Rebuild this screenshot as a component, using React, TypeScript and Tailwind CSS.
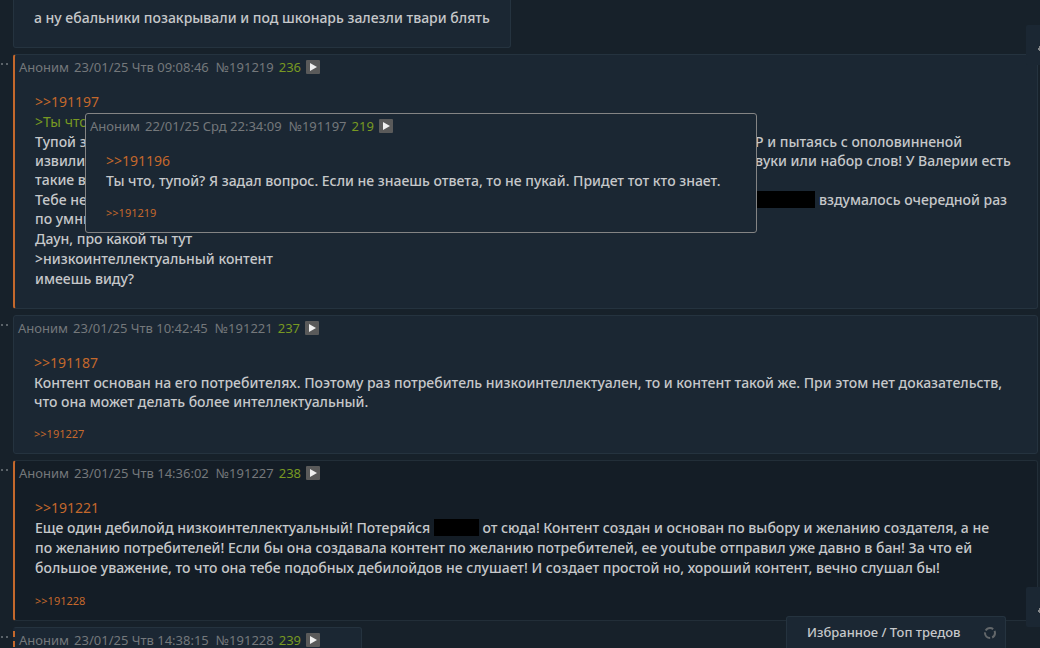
import React from 'react';
import clsx from 'clsx';

interface PostData {
  name: string;
  date: string;
  id: string;
  index: number;
}

interface PostProps {
  post: PostData;
  variant?: 'plain' | 'reply' | 'dark' | 'dashed' | 'preview';
  className?: string;
  replies?: string[];
  children?: React.ReactNode;
}

const posts: Record<string, PostData> = {
  p219: { name: 'Аноним', date: '22/01/25 Срд 22:34:09', id: '191197', index: 219 },
  p236: { name: 'Аноним', date: '23/01/25 Чтв 09:08:46', id: '191219', index: 236 },
  p237: { name: 'Аноним', date: '23/01/25 Чтв 10:42:45', id: '191221', index: 237 },
  p238: { name: 'Аноним', date: '23/01/25 Чтв 14:36:02', id: '191227', index: 238 },
  p239: { name: 'Аноним', date: '23/01/25 Чтв 14:38:15', id: '191228', index: 239 },
};

const variants = {
  plain: 'border border-[#25333f] bg-[#1b2733]',
  reply: 'border border-l-2 border-[#25333f] border-l-[#c4682c] bg-[#1b2733]',
  dark: 'border border-l-2 border-[#222e38] border-l-[#c4682c] bg-[#141d26]',
  dashed: 'border border-l-2 border-[#25333f] border-l-[#c4682c] [border-left-style:dashed] bg-[#1b2733]',
  preview: 'border border-[#848484] bg-[#1b2733]',
};

const PostLink = ({ id }: { id: string }) => (
  <a href={`#${id}`} className="font-normal text-[#c4682c]">&gt;&gt;{id}</a>
);

const Redacted = ({ className }: { className: string }) => (
  <span className={clsx('mt-px inline-block h-[17px] bg-black align-top', className)} />
);

// A line whose middle part stays under the preview
const SplitLine = ({ left, children }: { left: string; children: React.ReactNode }) => (
  <span className="flex">
    <span className="w-[720px] shrink-0">{left}</span>
    <span className="flex gap-1">{children}</span>
  </span>
);

const PostHeader = ({ post }: { post: PostData }) => (
  <header className="flex h-5 items-center gap-[5px] text-[13px] leading-5 text-[#74787b]">
    <span>{post.name}</span>
    <time className="pr-[2px]">{post.date}</time>
    <a href={`#${post.id}`}>№{post.id}</a>
    <span className="text-[#789922]">{post.index}</span>
    <button type="button" aria-label="Меню поста" className="flex h-[14px] w-[14px] items-center justify-center rounded-[1px] bg-[#5a5a5a]">
      <svg width="14" height="14" viewBox="0 0 14 14" fill="#f0f0f0"><path d="M4 3l7 4-7 4z" /></svg>
    </button>
  </header>
);

const Post = ({ post, variant = 'plain', className, replies, children }: PostProps) => (
  <article className={clsx('rounded-[3px] pt-[2px] pl-1', variants[variant], className)}>
    <PostHeader post={post} />
    <div className="mt-[15px] flex flex-col gap-px pr-5 pl-4 text-[14px] leading-[19px] font-medium">{children}</div>
    {replies ? (
      <div className="mt-[13px] pb-[9px] pl-4 text-[11px] leading-5">
        {replies.map((id) => <PostLink key={id} id={id} />)}
      </div>
    ) : (
      <div className="h-5" />
    )}
  </article>
);

// Gutter with the clipped dots + the post itself
const Row = ({ children }: { children: React.ReactNode }) => (
  <div className="flex">
    <div className="w-[13px] shrink-0 pt-2">
      <svg width="10" height="4" viewBox="0 0 10 4" fill="#5b6369"><path d="M1 1h2v2H1zM6 1h2v2H6z" /></svg>
    </div>
    <div className="relative min-w-0 flex-1">{children}</div>
  </div>
);

const SideTab = ({ className, label }: { className: string; label: string }) => (
  <button type="button" aria-label={label} className={clsx('absolute right-0 flex h-10 w-[14px] justify-end rounded-l-[2px] bg-[#1b2733]', className)}>
    <svg width="2" height="40" viewBox="0 0 2 40" fill="#85888a"><path d="M2 21v5H1v-1H0v-2h1v-2z" /></svg>
  </button>
);

export default function App() {
  return (
    <main className="relative h-screen overflow-hidden bg-[#17212a] font-['Noto_Sans',sans-serif] text-[#c6c8ca]">
      <div className="flex flex-col gap-[6px] pr-[2px]">
        <article className="ml-[13px] w-fit rounded-b-[3px] border border-t-0 border-[#25333f] bg-[#1b2733] px-5 pt-2 pb-5 text-[14px] leading-[19px] font-medium">
          а ну ебальники позакрывали и под шконарь залезли твари блять
        </article>

        <Row>
          <Post post={posts.p236} variant="reply">
            <p><PostLink id="191197" /></p>
            <p className="font-normal text-[#789922]">&gt;Ты что</p>
            <p className="whitespace-nowrap">
              <SplitLine left="Тупой з">Р и пытаясь с ополовинненой</SplitLine>
              <SplitLine left="извили">вуки или набор слов! У Валерии есть</SplitLine>
              такие в
            </p>
            <p className="whitespace-nowrap">
              <SplitLine left="Тебе не"><Redacted className="w-[60px]" /> вздумалось очередной раз</SplitLine>
              по умни
            </p>
            <p>Даун, про какой ты тут</p>
            <p>&gt;низкоинтеллектуальный контент</p>
            <p>имеешь виду?</p>
          </Post>
          <Post post={posts.p219} variant="preview" className="absolute top-[59px] left-[72px] w-[672px] whitespace-nowrap" replies={['191219']}>
            <p><PostLink id="191196" /></p>
            <p>Ты что, тупой? Я задал вопрос. Если не знаешь ответа, то не пукай. Придет тот кто знает.</p>
          </Post>
        </Row>

        <Row>
          <Post post={posts.p237} replies={['191227']}>
            <p><PostLink id="191187" /></p>
            <p>
              Контент основан на его потребителях. Поэтому раз потребитель низкоинтеллектуален, то и контент такой же. При этом нет доказательств,<br />
              что она может делать более интеллектуальный.
            </p>
          </Post>
        </Row>

        <Row>
          <Post post={posts.p238} variant="dark" replies={['191228']}>
            <p><PostLink id="191221" /></p>
            <p className="leading-5">
              Еще один дебилойд низкоинтеллектуальный! Потеряйся <Redacted className="w-[45px]" /> от сюда! Контент создан и основан по выбору и желанию создателя, а не<br />
              по желанию потребителей! Если бы она создавала контент по желанию потребителей, ее youtube отправил уже давно в бан! За что ей<br />
              большое уважение, то что она тебе подобных дебилойдов не слушает! И создает простой но, хороший контент, вечно слушал бы!
            </p>
          </Post>
        </Row>

        <Row>
          <Post post={posts.p239} variant="dashed" className="w-[349px]" />
        </Row>
      </div>

      <SideTab label="Наверх" className="top-[25px]" />
      <SideTab label="Вниз" className="bottom-[21px]" />

      <footer className="absolute right-[34px] bottom-0 flex h-8 w-[220px] items-center justify-between rounded-t-[3px] border border-b-0 border-[#25333f] bg-[#1b2733] pr-2 pl-5 text-[13px] font-medium">
        <span><a href="#favorites">Избранное</a> / <a href="#top">Топ тредов</a></span>
        <svg width="14" height="14" viewBox="0 0 14 14" fill="none" stroke="#63676a" strokeWidth="2">
          <circle cx="7" cy="7" r="5" strokeDasharray="8.4 2.07" strokeDashoffset="3" />
        </svg>
      </footer>
    </main>
  );
}
